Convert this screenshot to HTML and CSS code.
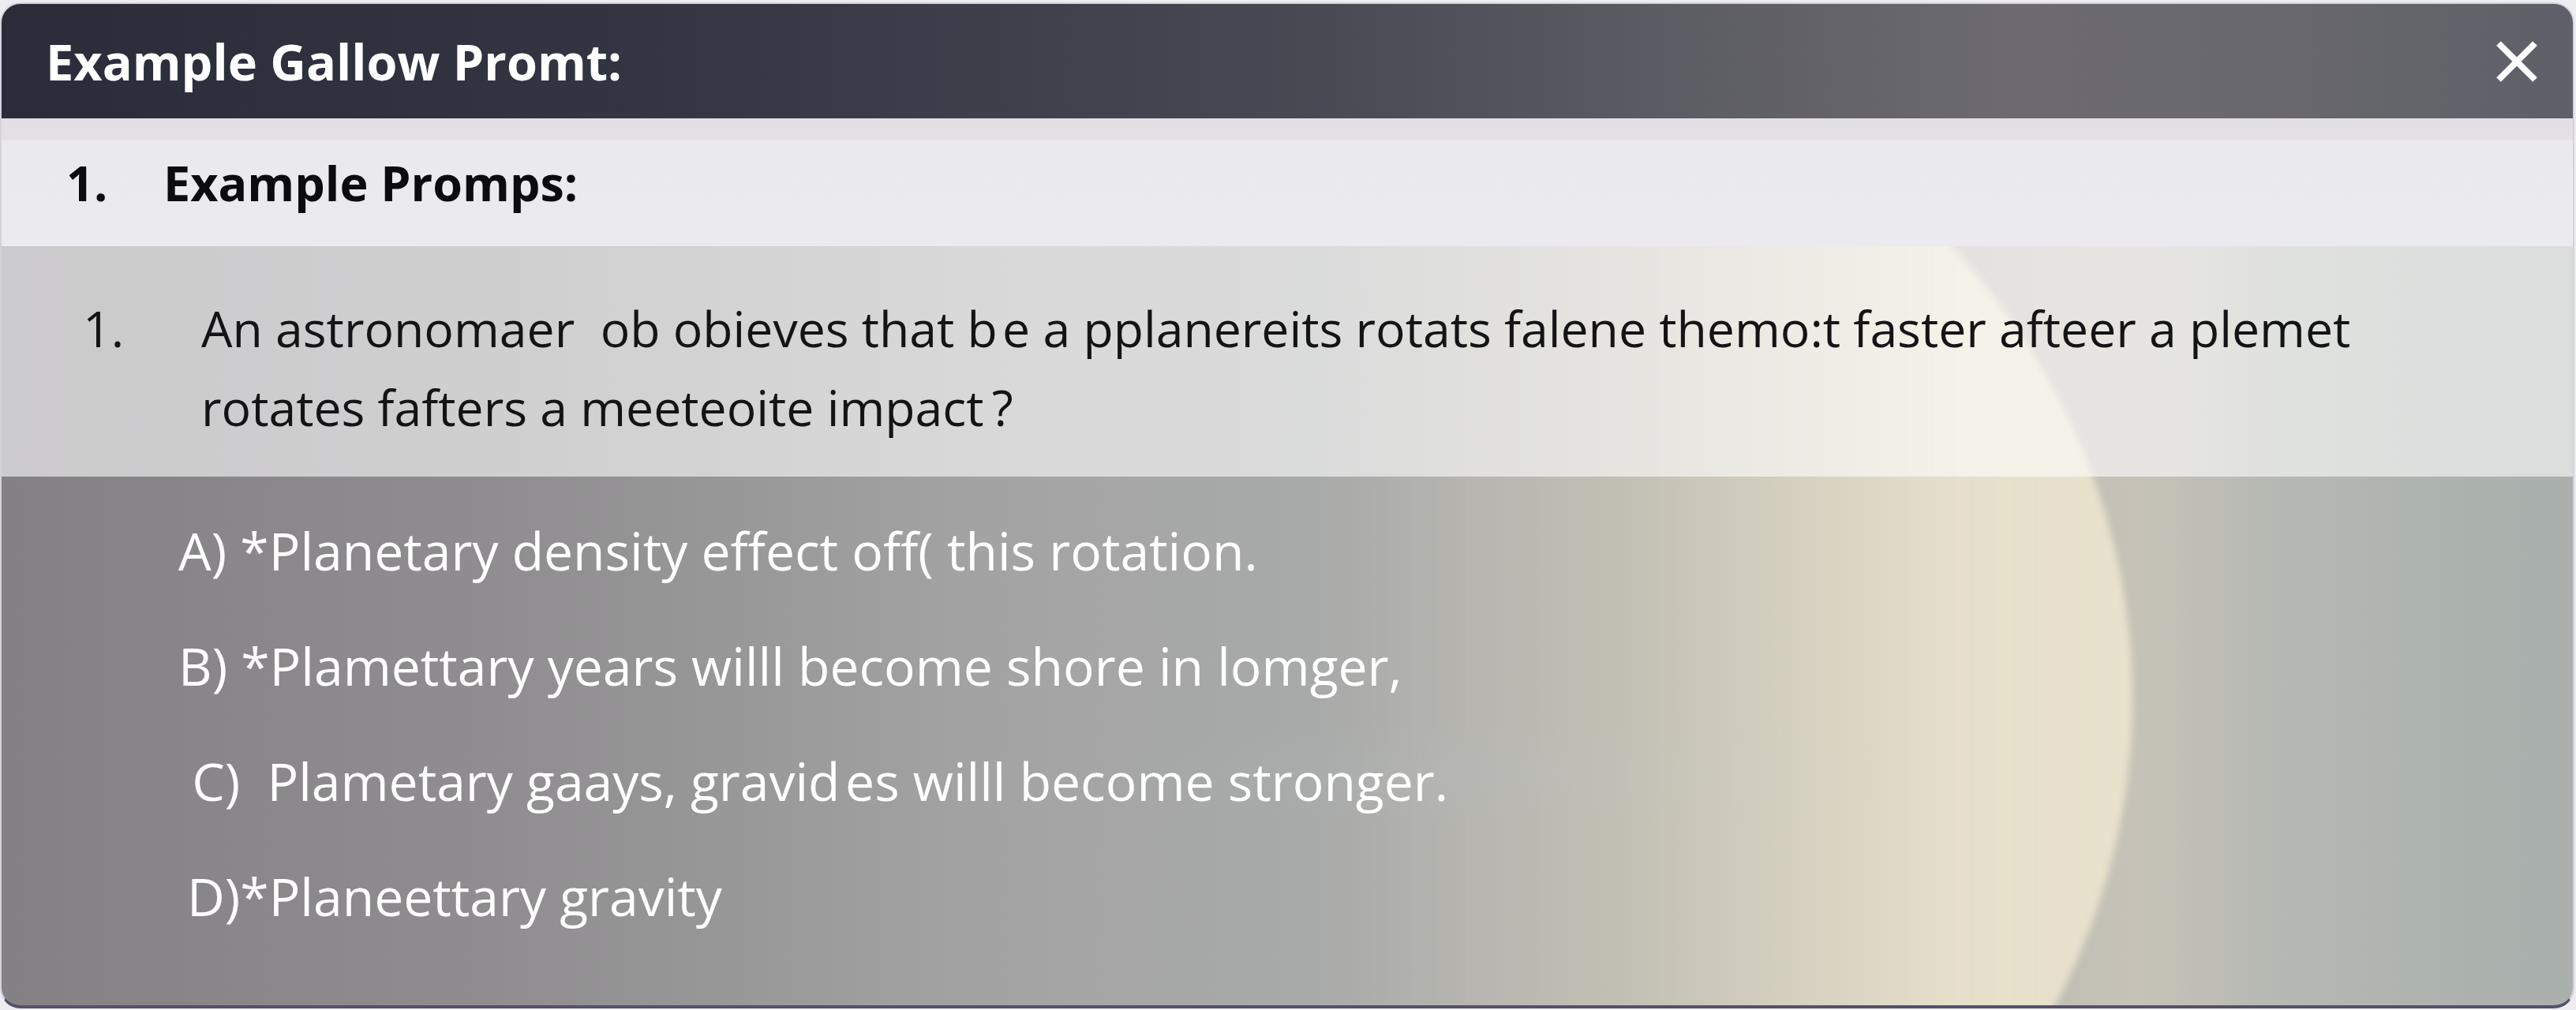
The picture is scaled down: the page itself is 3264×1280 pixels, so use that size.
FILE: index.html
```html
<!DOCTYPE html>
<html lang="en">

<head>
    <meta charset="utf-8">
    <title>Example Gallow Promt</title>
    <link rel="stylesheet" href="styles.css">
</head>

<body>

    <div class="dialog">
        <header class="dialog-head">
            <h1>Example Gallow Promt:</h1>
            <button class="close" aria-label="Close">
                <svg width="54" height="54" viewBox="0 0 54 54">
                    <path d="M4 4 L50 50 M50 4 L4 50" stroke="#ffffff" stroke-width="8" fill="none"/>
                </svg>
            </button>
        </header>

        <div class="section-head">
            <span class="num">1.</span>
            <span>Example Promps:</span>
        </div>

        <div class="question">
            <span class="num">1.</span>
            <p>An astronomaer&nbsp; ob obieves that b&#8202;e a pplanereits rotats falene themo:t faster afteer a plemet<br>rotates fafters a meeteoite impact&#8201;?</p>
        </div>

        <ul class="options">
            <li>A) *Planetary density effect off( this rotation.</li>
            <li>B) *Plamettary years willl become shore in lomger,</li>
            <li>&nbsp;C)&nbsp; Plametary gaays, gravid&#8202;es willl become stronger.</li>
            <li>&#8201;D)*Planeettary gravity</li>
        </ul>
    </div>

</body>

</html>
```

FILE: styles.css
```css
body {
    margin: 0;
    background-color: #ececf1;
    font-family: "Open Sans", "Noto Sans", sans-serif;
}

.dialog {
    position: relative;
    isolation: isolate;
    box-sizing: border-box;
    height: 1275px;
    margin: 3px 2px 0 0;
    border: 2px solid #d4d3da;
    border-bottom: 4px solid #55516a;
    border-radius: 26px;
    overflow: hidden;
    display: flex;
    flex-direction: column;
    background:
        radial-gradient(ellipse 560px 70px at 1950px 975px, rgba(176, 184, 186, 0.3), rgba(176, 184, 186, 0)),
        linear-gradient(90deg, #848185 0%, #8f8d8f 19%, #a3a3a3 38%, #a8aaa9 51%, #b6b4ae 64%, #bcbab2 76%, #c6c2b8 83%, #b4b8b2 89%, #abb2ae 96%, #a9b0ad 100%);
}

/* blurred planet behind the panel, lit from the right */
.dialog::before {
    content: "";
    position: absolute;
    z-index: -1;
    left: 700px;
    top: -20px;
    width: 2000px;
    height: 1800px;
    border-radius: 50%;
    background: linear-gradient(90deg,
        rgba(231, 224, 203, 0) 48%,
        rgba(226, 219, 198, 0.3) 68%,
        rgba(228, 221, 200, 0.7) 80%,
        rgba(231, 224, 203, 0.97) 89%,
        rgba(232, 225, 204, 1) 100%);
    filter: blur(5px);
}

/* header bar */
.dialog-head {
    flex: none;
    height: 145px;
    box-sizing: border-box;
    padding: 0 44px 0 56px;
    display: flex;
    align-items: center;
    justify-content: space-between;
    background: linear-gradient(90deg, #2a2c3a 0%, #333543 25%, #474852 50%, #5c5c64 65%, #6c6a70 78%, #69686e 88%, #5e5f68 100%);
}

.dialog-head h1 {
    margin: 0;
    color: #ffffff;
    font-size: 63px;
    font-weight: 700;
    line-height: 1;
}

button.close {
    background: none;
    border: none;
    padding: 0;
    width: 54px;
    height: 54px;
    display: flex;
}

/* list heading */
.section-head {
    flex: none;
    height: 162px;
    box-sizing: border-box;
    padding-left: 82px;
    display: flex;
    align-items: center;
    color: #0c0c10;
    font-size: 61px;
    font-weight: 700;
    background: linear-gradient(180deg, #e2e0e5 0, #e3e1e6 27px, #eae9ed 28px, #ebeaee 100%);
}

.section-head .num {
    width: 123px;
}

/* question text */
.question {
    flex: none;
    height: 292px;
    box-sizing: border-box;
    padding: 54px 0 0 103px;
    display: flex;
    color: #141416;
    font-size: 62.5px;
    line-height: 100px;
    background-color: rgba(255, 255, 255, 0.58);
}

.question .num {
    flex: none;
    width: 150px;
}

.question p {
    margin: 0;
}

/* answer options */
ul.options {
    flex: 1;
    list-style: none;
    margin: 0;
    padding: 20px 0 0 224px;
    color: #ffffff;
    font-size: 66px;
    line-height: 146px;
}
```
